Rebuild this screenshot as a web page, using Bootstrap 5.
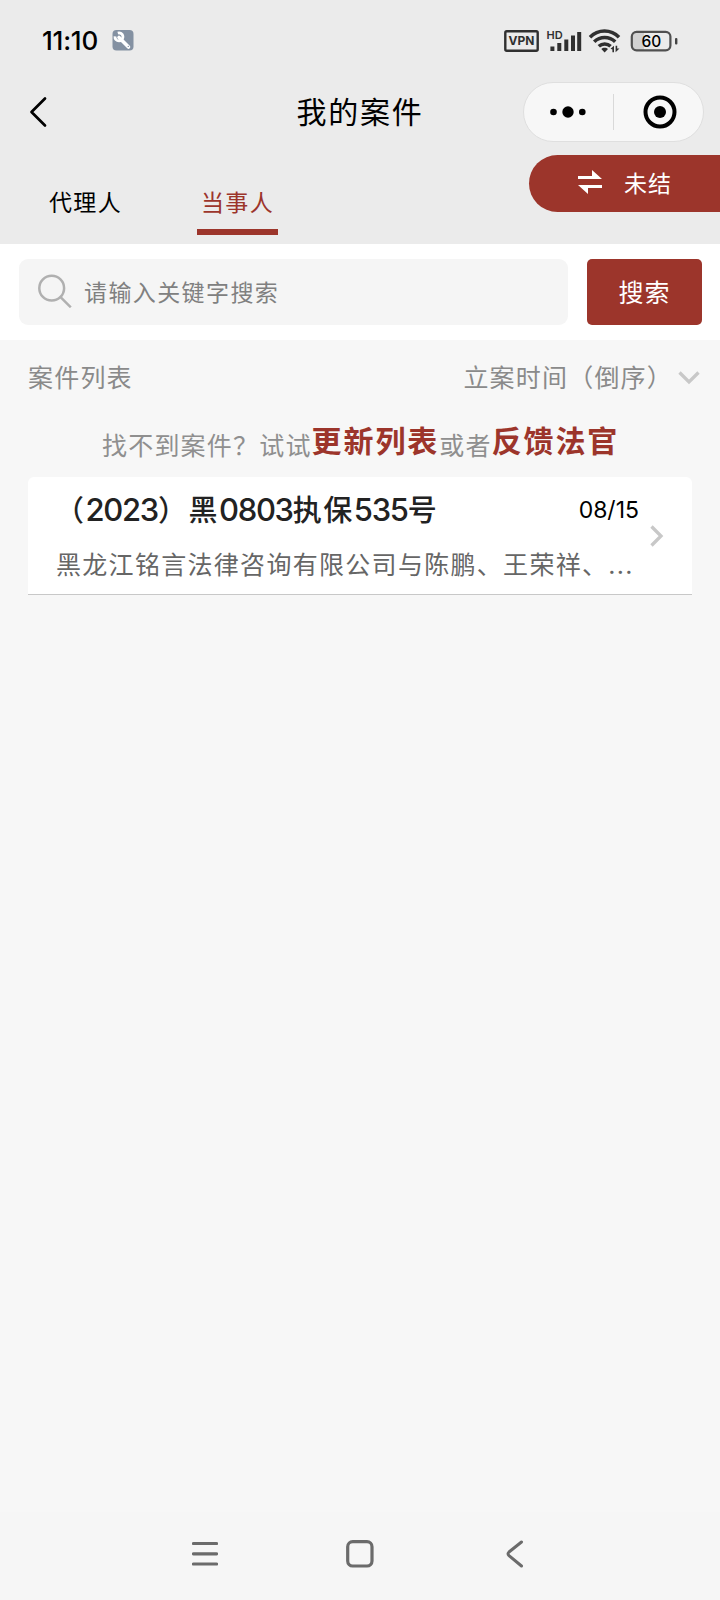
<!DOCTYPE html>
<html lang="zh-CN">
<head>
<meta charset="utf-8">
<meta name="viewport" content="width=device-width, initial-scale=1">
<title>我的案件</title>
<link href="https://cdn.jsdelivr.net/npm/bootstrap@5.3.0/dist/css/bootstrap.min.css" rel="stylesheet">
<style>
:root{--brand:#9c352b}
body{font-family:"Noto Sans CJK SC",sans-serif;background:#f7f7f7;color:#000;line-height:1}
svg{display:block;flex:none}
.num{font-family:Inter,"Noto Sans CJK SC",sans-serif}
.screen{height:1600px;overflow:hidden}
.top-area{background:#ebebeb;height:244px}
.status{height:80px;padding:1px 42px 0 42px}
.clock{font-size:26px;font-weight:500;letter-spacing:-.2px;width:57px;white-space:nowrap}
.tool-icon{margin-left:13px}
.title-row{height:64px;padding-left:29px}
.page-title{font-size:30px;letter-spacing:1.7px;line-height:60px;top:0}
.capsule{width:181px;height:60px;background:#f7f7f7;border:1px solid #dfdfdf;margin:0 16px 0 0}
.capsule .split{width:1px;height:36px;background:#d9d9d9}
.tabs{height:100px}
.tab-item{font-size:23px;letter-spacing:1.4px;width:81px;height:80px;margin-top:11px;padding-top:5px;line-height:83px;border-bottom:6px solid transparent;text-align:center;white-space:nowrap}
.tab-item.on{color:var(--brand);border-color:var(--brand)}
.status-pill{background:var(--brand);color:#fff;width:191px;height:57px;border-radius:29px 0 0 29px;font-size:23px;letter-spacing:1px;margin-top:11px;padding:0 0 3px 49px}
.search-row{height:96px;padding:0 18px 0 19px}
.search-box{height:66px;width:549px;background:#f5f5f5;border-radius:9px;color:#808080;font-size:23px;letter-spacing:1.4px;padding:0 0 2px 19px}
.search-btn{width:115px;height:66px;border-radius:5px;background:var(--brand);color:#fff;font-size:25px;letter-spacing:1px;border:0;padding:0 0 2px}
.list-head{height:76px;color:#8a8a8a;font-size:25px;letter-spacing:1.2px;padding:0 20px 4px 28px}
.hint{height:61px;color:#8f8f8f;font-size:25px;letter-spacing:1.2px;line-height:56px;white-space:nowrap;padding-left:102px}
.hint b{color:var(--brand);font-size:30px;letter-spacing:1.9px;position:relative;top:-3px;line-height:1}
.case{margin:0 28px;height:118px;background:#fff;border-bottom:1px solid #c8c8c8;border-radius:6px 6px 0 0;padding:0 28px 0 28px}
.case-no{font-size:29px;font-weight:500;color:#222;letter-spacing:1.5px;line-height:62px;height:66px;white-space:nowrap;margin-left:-1px}
.case-no .num{font-size:31px;letter-spacing:-1.3px}
.case-date{font-size:23px;line-height:67px}
.parties{font-size:25px;letter-spacing:1.3px;color:#666;line-height:38px}
.sysnav{height:88px;background:#f6f6f6;padding:0 196px 4px 192px}
.sysnav .home{margin-left:-5px}
</style>
<script src="https://cdn.jsdelivr.net/npm/bootstrap@5.3.0/dist/js/bootstrap.bundle.min.js"></script>
</head>
<body>
<div class="screen d-flex flex-column">
  <header class="top-area">
    <div class="status d-flex align-items-center">
      <span class="clock num">11:10</span>
      <svg class="tool-icon" width="22" height="22" viewBox="0 0 22 22"><rect x=".5" width="21" height="20.500" rx="4" fill="#8491a2"/><path d="M7 7.500 16.500 17" stroke="#fff" stroke-width="3.600" stroke-linecap="round"/><path d="M5.800 3.100A4 4 0 1 1 3 6.400" fill="none" stroke="#fff" stroke-width="2.800"/><circle cx="16.300" cy="16.400" r=".7" fill="#8795a8"/></svg>
      <svg class="ms-auto" width="174" height="26" viewBox="0 0 174 26" fill="#303030">
        <rect x="1.300" y="3.300" width="32.400" height="19.400" rx="1.500" fill="none" stroke="#303030" stroke-width="2.400"/>
        <text x="17.500" y="17.400" text-anchor="middle" font-family="Inter" font-size="12" font-weight="700">VPN</text>
        <text x="42.500" y="10.800" font-family="Inter" font-size="11" font-weight="600">HD</text>
        <g stroke="#303030" stroke-width="4"><path d="M48.400 18.500v4.500M55.300 15v8M62.300 11.500V23M69 7.500V23M75.200 4v19"/></g>
        <g fill="none" stroke="#303030" stroke-width="3.500"><path d="M86 9.200C94 1 107 1 115 9.200"/><path d="M90.200 13.800c5.800-5.700 15.200-5.700 21 0"/><path d="M94.800 18.300c3.500-3.200 8.400-3.200 11.800 0"/></g>
        <path d="M97.300 21c1.700-1.600 5-1.600 6.700 0L100.600 24.500ZM106.500 20.800 110 17.800V24.300H108.400V21.500ZM111.600 17.800H113.200V20.500H115.500L111.600 24.300Z"/>
        <path d="M133 4h7v18h-7q-4.500 0-4.500-4.500V8.500Q128.500 4 133 4Z" fill="#d2d2d2"/>
        <rect x="127.800" y="3.800" width="38.600" height="18.600" rx="4.800" fill="none" stroke="#505050" stroke-width="2.200"/>
        <rect x="171" y="10" width="2.400" height="6.500" rx="1" fill="#444"/>
        <text x="147.500" y="18.700" text-anchor="middle" font-family="Inter" font-size="15.500" font-weight="500" fill="#000">60</text>
      </svg>
    </div>
    <div class="title-row d-flex align-items-center position-relative">
      <svg width="18" height="32" viewBox="0 0 18 32"><path d="M16 2.500 2.500 16 16 29.500" fill="none" stroke="#000" stroke-width="2.700" stroke-linecap="round" stroke-linejoin="round"/></svg>
      <div class="page-title position-absolute start-0 end-0 text-center">我的案件</div>
      <div class="capsule rounded-pill d-flex align-items-center ms-auto position-relative">
        <svg width="89" height="36" viewBox="0 0 89 36"><circle cx="29.500" cy="18" r="3.300"/><circle cx="44" cy="18" r="5.700"/><circle cx="58.300" cy="18" r="3.300"/></svg>
        <span class="split"></span>
        <svg width="88" height="36" viewBox="0 0 88 36"><circle cx="46" cy="18" r="14.500" fill="none" stroke="#000" stroke-width="4"/><circle cx="46" cy="18" r="6"/></svg>
      </div>
    </div>
    <div class="tabs d-flex align-items-start">
      <div class="tab-item" style="margin-left:45px">代理人</div>
      <div class="tab-item on" style="margin-left:71px">当事人</div>
      <div class="status-pill ms-auto d-flex align-items-center">
        <svg width="24" height="24" viewBox="0 0 24 24" fill="#fff"><path d="M0 6h14V0l10 9H0ZM24 18H10v6L0 15h24Z"/></svg>
        <span style="margin-left:22px">未结</span>
      </div>
    </div>
  </header>

  <div class="search-row bg-white d-flex align-items-center justify-content-between">
    <div class="search-box d-flex align-items-center">
      <svg width="34" height="34" viewBox="0 0 34 34" fill="none" stroke="#b0b0b0" stroke-width="2.500"><circle cx="13.700" cy="14.200" r="12.400"/><path d="m22.800 23.300 10 10"/></svg>
      <span style="margin-left:12px">请输入关键字搜索</span>
    </div>
    <button class="search-btn" type="button">搜索</button>
  </div>

  <div class="list-head d-flex align-items-center">
    <span>案件列表</span>
    <span class="ms-auto">立案时间（倒序）</span>
    <svg style="margin:4px 0 0 5px" width="22" height="14" viewBox="0 0 22 14"><path d="m1.500 1.500 9.500 9.500 9.500-9.500" fill="none" stroke="#c8c8c8" stroke-width="3.300"/></svg>
  </div>
  <div class="hint">找不到案件？试试<b>更新列表</b>或者<b>反馈法官</b></div>

  <div class="case d-flex align-items-center">
    <div class="flex-grow-1 overflow-hidden h-100">
      <div class="d-flex justify-content-between">
        <div class="case-no">（<span class="num">2023</span>）黑<span class="num">0803</span>执保<span class="num">535</span>号</div>
        <div class="case-date num">08/15</div>
      </div>
      <div class="parties text-truncate">黑龙江铭言法律咨询有限公司与陈鹏、王荣祥、<span class="num">...</span></div>
    </div>
    <svg style="margin-left:11px" width="14" height="22" viewBox="0 0 14 22"><path d="m1.500 1.500 9.500 9.500-9.500 9.500" fill="none" stroke="#c8c8c8" stroke-width="3.300"/></svg>
  </div>

  <nav class="sysnav d-flex align-items-center justify-content-between mt-auto">
    <svg width="26" height="28" viewBox="0 0 26 28"><path d="M1.500 3.500h23M1.500 13.800h23M1.500 24h23" stroke="#6b6b6b" stroke-width="3.200" stroke-linecap="round"/></svg>
    <svg class="home" width="28" height="28" viewBox="0 0 28 28"><rect x="1.700" y="1.700" width="24.300" height="24.300" rx="5" fill="none" stroke="#6b6b6b" stroke-width="3.200"/></svg>
    <svg width="18" height="28" viewBox="0 0 18 28"><path d="M15.500 2 3 12Q1 13.800 3 15.600L15.500 26" fill="none" stroke="#6b6b6b" stroke-width="3" stroke-linecap="round"/></svg>
  </nav>
</div>
</body>
</html>
